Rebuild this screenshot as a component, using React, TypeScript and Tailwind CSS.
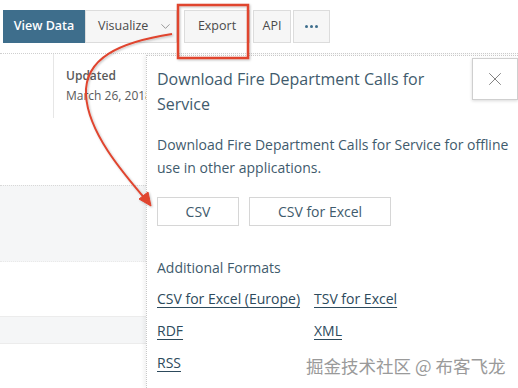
import { ChevronDown, X } from "lucide-react";

const NavButton = ({ label, className }: { label: string; className?: string }) => (
  <button className={`h-[33px] text-[12.5px] border border-[#dcdcdc] bg-[#f6f6f6] text-[#4a4a4a] ${className ?? ""}`}>
    {label}
  </button>
);

const FormatLink = ({ label }: { label: string }) => (
  <a className="text-[14px] text-[#2d4a5c] underline underline-offset-[3px] decoration-[1px]">{label}</a>
);

const App = () => {
  return (
    <div className="relative w-[518px] h-[388px] overflow-hidden bg-white font-['Open_Sans',sans-serif]">
      {/* top nav */}
      <div className="flex items-center pt-[10px] pl-[3px] gap-[2px]">
        <button className="h-[33px] w-[82px] bg-[#3e6e8c] text-white text-[12.5px] font-semibold">View Data</button>
        <button className="h-[33px] w-[92px] -ml-[2px] flex items-center pl-[12px] gap-[10px] border border-[#dcdcdc] bg-[#f6f6f6] text-[12.5px] text-[#4a4a4a]">
          Visualize
          <ChevronDown size={15} strokeWidth={1.2} className="text-[#777]" />
        </button>
        <NavButton label="Export" className="ml-[5px] w-[66px] bg-[#efefef]" />
        <NavButton label="API" className="ml-[1px] w-[38px]" />
        <button className="h-[33px] w-[37px] flex items-center justify-center gap-[2px] border border-[#dcdcdc] bg-[#f6f6f6]">
          <span className="w-[3px] h-[3px] rounded-full bg-[#3e6e8c]" />
          <span className="w-[3px] h-[3px] rounded-full bg-[#3e6e8c]" />
          <span className="w-[3px] h-[3px] rounded-full bg-[#3e6e8c]" />
        </button>
      </div>
      <div className="mt-[10px] border-b border-dotted border-[#cfcfcf]" />

      {/* info row */}
      <div className="flex h-[64px]">
        <div className="w-[54px] border-r border-[#e6e6e6]" />
        <div className="pl-[12px] pt-[12px] text-[12px] leading-[20px] text-[#5a5a5a]">
          <p className="font-semibold">Updated</p>
          <p>March 26, 2018</p>
        </div>
      </div>

      {/* background rows */}
      <div className="mt-[67px] h-[77px] bg-[#f5f6f7] border-t border-dotted border-[#d8d8d8] border-b border-b-[#e9e9e9]" />
      <div className="mt-[54px] h-[28px] bg-[#f5f6f7] border-y border-[#ececec]" />

      {/* export panel */}
      <div className="absolute left-[146px] top-[55px] right-0 bottom-0 bg-white border-l border-t border-dotted border-[#c8c8c8] shadow-[-2px_0_4px_rgba(0,0,0,0.06)]">
        <div className="flex">
          <h2 className="pl-[10px] pt-[11px] w-[300px] text-[16px] leading-[25px] text-[#3f5b6d]">
            Download Fire Department Calls for Service
          </h2>
          <button className="ml-auto mt-[2px] w-[46px] h-[42px] flex items-center justify-center border border-[#cfcfcf] shadow-[0_1px_3px_rgba(0,0,0,0.15)]">
            <X size={22} strokeWidth={1} className="text-[#777]" />
          </button>
        </div>
        <p className="pl-[10px] pr-[6px] mt-[16px] text-[14px] leading-[23px] text-[#3f5b6d]">
          Download Fire Department Calls for Service for offline use in other applications.
        </p>
        <div className="flex gap-[10px] pl-[10px] mt-[18px]">
          <button className="w-[82px] h-[29px] border border-[#d6d6d6] text-[14px] text-[#3f5b6d]">CSV</button>
          <button className="w-[142px] h-[29px] border border-[#d6d6d6] text-[14px] text-[#3f5b6d]">CSV for Excel</button>
        </div>
        <p className="pl-[10px] mt-[31px] text-[14px] text-[#3f5b6d]">Additional Formats</p>
        <div className="grid grid-cols-[157px_1fr] gap-y-[10px] pl-[10px] mt-[10px] leading-[22px]">
          <FormatLink label="CSV for Excel (Europe)" />
          <FormatLink label="TSV for Excel" />
          <FormatLink label="RDF" />
          <FormatLink label="XML" />
          <FormatLink label="RSS" />
        </div>
      </div>

      {/* annotation: red box + arrow */}
      <svg className="absolute inset-0 pointer-events-none" width="518" height="388">
        <defs>
          <filter id="sh" x="-20%" y="-20%" width="140%" height="140%">
            <feDropShadow dx="1" dy="1" stdDeviation="1" floodColor="#000" floodOpacity="0.25" />
          </filter>
        </defs>
        <g filter="url(#sh)" stroke="#e0442f" fill="none">
          <rect x="178" y="5" width="70" height="53" strokeWidth="2.5" />
          <path d="M172 34 C 120 42, 84 58, 86 95 C 88 132, 122 172, 147 201" strokeWidth="2" />
          <path d="M139 199 L151 206 L148 192 Z" fill="#e0442f" strokeWidth="1" />
        </g>
      </svg>

      {/* watermark */}
      <div className="absolute left-[306px] top-[353px] text-[17.5px] text-[#9a9a9a] font-['Noto_Sans_CJK_SC',sans-serif] [text-shadow:0_0_2px_#fff,0_0_2px_#fff]">
        掘金技术社区 @ 布客飞龙
      </div>
    </div>
  );
};

export default App;
